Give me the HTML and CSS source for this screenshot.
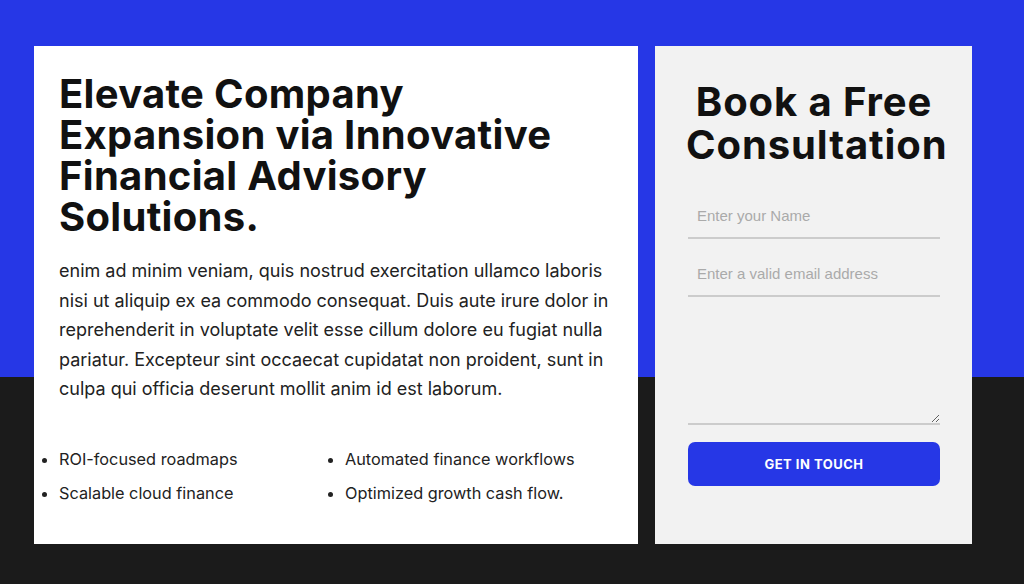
FILE: index.html
```html
<!DOCTYPE html>
<html>
<head>
    <title>Financial Advisory</title>
    <link rel="stylesheet" href="styles.css">
</head>
<body>
    <div class="hero">
        <div class="intro">
            <h1>Elevate Company Expansion via Innovative Financial Advisory Solutions.</h1>
            <p>enim ad minim veniam, quis nostrud exercitation ullamco laboris nisi ut aliquip ex ea commodo consequat. Duis aute irure dolor in reprehenderit in voluptate velit esse cillum dolore eu fugiat nulla pariatur. Excepteur sint occaecat cupidatat non proident, sunt in culpa qui officia deserunt mollit anim id est laborum.</p>
            <ul class="features">
                <li>ROI-focused roadmaps</li>
                <li>Automated finance workflows</li>
                <li>Scalable cloud finance</li>
                <li>Optimized growth cash flow.</li>
            </ul>
        </div>
        <div class="booking">
            <h2>Book a Free Consultation</h2>
            <form>
                <input type="text" placeholder="Enter your Name">
                <input type="email" placeholder="Enter a valid email address">
                <textarea></textarea>
                <button type="button">GET IN TOUCH</button>
            </form>
        </div>
    </div>
</body>
</html>
```

FILE: styles.css
```css
body {
    margin: 0;
    height: 584px;
    background: linear-gradient(#2637e6 0, #2637e6 377px, #1b1b1b 377px);
    font-family: Inter, "Noto Sans", sans-serif;
    color: #111;
}
.hero {
    display: flex;
    gap: 17px;
    padding: 46px 52px 0 34px;
}
.intro {
    width: 604px;
    height: 498px;
    box-sizing: border-box;
    background-color: #fff;
    padding: 27px 20px 0 25px;
}
h1 {
    margin: 0;
    font-size: 40px;
    line-height: 41px;
    font-weight: 700;
    letter-spacing: 0.3px;
    color: #111;
    width: 520px;
}
.intro p {
    margin: 19px 0 0;
    font-size: 18px;
    line-height: 29.5px;
    color: #222;
}
.features {
    display: grid;
    grid-template-columns: 286px 286px;
    row-gap: 12px;
    margin: 44px 0 0;
    padding-left: 0;
    list-style: disc outside;
    font-size: 16.3px;
    line-height: 22px;
    color: #222;
}
.booking {
    width: 317px;
    height: 498px;
    box-sizing: border-box;
    background-color: #f2f2f2;
    padding: 34px 30px 0 31px;
}
h2 {
    margin: 0;
    font-size: 40px;
    line-height: 43px;
    font-weight: 700;
    letter-spacing: 0.9px;
    text-align: center;
    color: #111;
}
form {
    display: flex;
    flex-direction: column;
    margin: 28px 2px 0;
}
input, textarea {
    font-family: "Liberation Sans", Arial, sans-serif;
    font-size: 15px;
    background: transparent;
    border: none;
    border-bottom: 2px solid #ccc;
    padding: 12px 9px;
    outline: none;
    color: #333;
}
input {
    height: 19px;
    margin-bottom: 13px;
}
textarea {
    height: 89px;
    resize: vertical;
}
::placeholder {
    color: #aaa;
}
button {
    margin-top: 17px;
    height: 44px;
    border: none;
    border-radius: 7px;
    background-color: #2637e6;
    color: #fff;
    font-family: Inter, sans-serif;
    font-weight: 700;
    font-size: 13px;
    letter-spacing: 0.5px;
    cursor: pointer;
}
```
